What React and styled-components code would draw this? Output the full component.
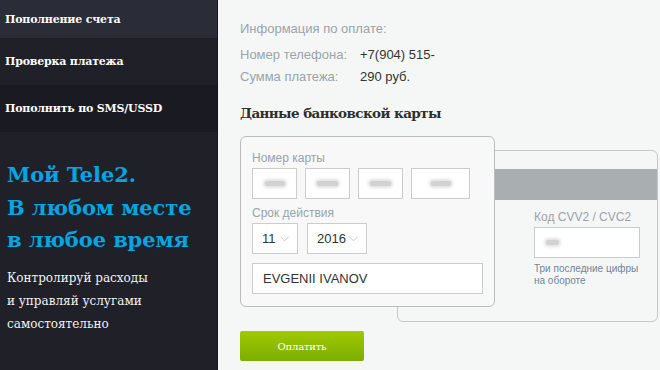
import React from "react";
import styled, { createGlobalStyle } from "styled-components";

const Global = createGlobalStyle`
  html, body { margin: 0; padding: 0; }
  body { width: 660px; height: 370px; overflow: hidden; background: #f5f7f6; }
  * { box-sizing: border-box; }
`;

const slab = `"DejaVu Serif", serif`;

const Page = styled.div`
  display: flex;
  width: 660px;
  height: 370px;
  font-family: "Liberation Sans", Arial, sans-serif;
`;

const Sidebar = styled.aside`
  width: 218px;
  flex: none;
  display: flex;
  flex-direction: column;
  background: #202128;
  border-right: 1px solid #16171c;
`;

const MenuItem = styled.div`
  height: ${(p) => p.$h}px;
  display: flex;
  align-items: center;
  padding: 0 0 0 5px;
  background: ${(p) => p.$bg};
  color: #fff;
  font-family: ${slab};
  font-weight: bold;
  font-size: 11px;
  letter-spacing: -0.2px;
`;

const Promo = styled.div`
  padding: 27px 0 0 7px;
`;

const PromoTitle = styled.h1`
  margin: 0;
  color: #00a5e3;
  font-family: ${slab};
  font-weight: bold;
  font-size: 21px;
  line-height: 32.5px;
  letter-spacing: -0.1px;
`;

const PromoText = styled.p`
  margin: 10px 0 0;
  color: #f2f2f2;
  font-family: ${slab};
  font-size: 12px;
  line-height: 23px;
  letter-spacing: 0;
`;

const Main = styled.main`
  flex: 1;
  padding: 21px 0 0 22px;
  display: flex;
  flex-direction: column;
`;

const InfoTitle = styled.div`
  color: #9aa3ad;
  font-size: 13px;
  line-height: 16px;
`;

const InfoGrid = styled.div`
  display: grid;
  grid-template-columns: 120px auto;
  row-gap: 6px;
  margin-top: 10px;
  font-size: 13px;
  line-height: 16px;
`;

const InfoLabel = styled.span`
  color: #9aa3ad;
`;

const InfoValue = styled.span`
  color: #333;
`;

const SectionTitle = styled.h2`
  margin: 18px 0 0;
  color: #2e2e2e;
  font-family: ${slab};
  font-weight: bold;
  font-size: 13.5px;
  line-height: 20px;
  letter-spacing: -0.6px;
`;

const Cards = styled.div`
  display: grid;
  margin-top: 13px;
`;

const FrontCard = styled.div`
  grid-area: 1 / 1;
  z-index: 1;
  width: 255px;
  height: 171px;
  border: 1px solid #b9bdc0;
  border-radius: 6px;
  background: #f7f8f7;
  padding: 14px 11px 0;
  display: flex;
  flex-direction: column;
`;

const BackCard = styled.div`
  grid-area: 1 / 1;
  margin: 14px 0 0 157px;
  width: 261px;
  height: 172px;
  border: 1px solid #c4c8ca;
  border-radius: 6px;
  background: #f5f7f6;
  padding-top: 18px;
  display: flex;
  flex-direction: column;
`;

const Stripe = styled.div`
  height: 31px;
  background: #a9aeb0;
`;

const BackBody = styled.div`
  padding: 10px 0 0 136px;
  display: flex;
  flex-direction: column;
`;

const FieldLabel = styled.div`
  color: #9aa3ad;
  font-size: 12px;
  line-height: 14px;
  margin-top: ${(p) => p.$mt || 0}px;
`;

const Row = styled.div`
  display: flex;
  gap: ${(p) => p.$gap || 8}px;
  margin-top: ${(p) => p.$mt || 0}px;
`;

const Input = styled.div`
  width: ${(p) => p.$w}px;
  height: 31px;
  border: 1px solid #c9cdd0;
  background: #fff;
  display: flex;
  align-items: center;
  padding-left: ${(p) => p.$pl ?? 10}px;
  justify-content: ${(p) => (p.$center ? "center" : "flex-start")};
  color: #333;
  font-size: 13px;
  flex: none;
`;

/* blurred-out card digits */
const Blob = styled.span`
  display: block;
  width: ${(p) => p.$w}px;
  height: 5px;
  border-radius: 3px;
  background: #d2d2d2;
  box-shadow: 0 0 3px 2px #e2e2e2;
`;

const SelectBox = styled(Input)`
  justify-content: space-between;
  padding: 0 8px 0 9px;
  font-size: 13px;
`;

const Hint = styled.div`
  margin-top: 5px;
  color: #72849a;
  font-size: 10px;
  line-height: 12px;
`;

const PayButton = styled.button`
  margin-top: 9px;
  width: 124px;
  height: 30px;
  border: none;
  border-radius: 2px;
  background: linear-gradient(#a0c900, #7cae00);
  color: #fff;
  font-family: ${slab};
  font-size: 10px;
  letter-spacing: -0.2px;
  cursor: pointer;
  padding: 0;
`;

const Chevron = () => (
  <svg width="9" height="6" viewBox="0 0 9 6">
    <path d="M0.5 0.8 L4.5 4.8 L8.5 0.8" fill="none" stroke="#c4c7ca" strokeWidth="1" />
  </svg>
);

export default function App() {
  return (
    <Page>
      <Global />
      <Sidebar>
        <MenuItem $h={38} $bg="#2a2c37">Пополнение счета</MenuItem>
        <MenuItem $h={47} $bg="#1f2028">Проверка платежа</MenuItem>
        <MenuItem $h={47} $bg="#1a1b22">Пополнить по SMS/USSD</MenuItem>
        <Promo>
          <PromoTitle>
            Мой Tele2.
            <br />В любом месте
            <br />в любое время
          </PromoTitle>
          <PromoText>
            Контролируй расходы
            <br />и управляй услугами
            <br />самостоятельно
          </PromoText>
        </Promo>
      </Sidebar>
      <Main>
        <InfoTitle>Информация по оплате:</InfoTitle>
        <InfoGrid>
          <InfoLabel>Номер телефона:</InfoLabel>
          <InfoValue>+7(904) 515-</InfoValue>
          <InfoLabel>Сумма платежа:</InfoLabel>
          <InfoValue>290 руб.</InfoValue>
        </InfoGrid>
        <SectionTitle>Данные банковской карты</SectionTitle>
        <Cards>
          <FrontCard>
            <FieldLabel>Номер карты</FieldLabel>
            <Row $mt={3} $gap={8}>
              <Input $w={45} $center $pl={0}><Blob $w={20} /></Input>
              <Input $w={45} $center $pl={0}><Blob $w={21} /></Input>
              <Input $w={45} $center $pl={0}><Blob $w={21} /></Input>
              <Input $w={59} $center $pl={0}><Blob $w={20} /></Input>
            </Row>
            <FieldLabel $mt={7}>Срок действия</FieldLabel>
            <Row $mt={3} $gap={9}>
              <SelectBox $w={46}>11<Chevron /></SelectBox>
              <SelectBox $w={60}>2016<Chevron /></SelectBox>
            </Row>
            <Row $mt={9}>
              <Input $w={231}>EVGENII IVANOV</Input>
            </Row>
          </FrontCard>
          <BackCard>
            <Stripe />
            <BackBody>
              <FieldLabel>Код CVV2 / CVC2</FieldLabel>
              <Row $mt={3}>
                <Input $w={106} $pl={11}><Blob $w={13} /></Input>
              </Row>
              <Hint>
                Три последние цифры
                <br />
                на обороте
              </Hint>
            </BackBody>
          </BackCard>
        </Cards>
        <PayButton>Оплатить</PayButton>
      </Main>
    </Page>
  );
}
